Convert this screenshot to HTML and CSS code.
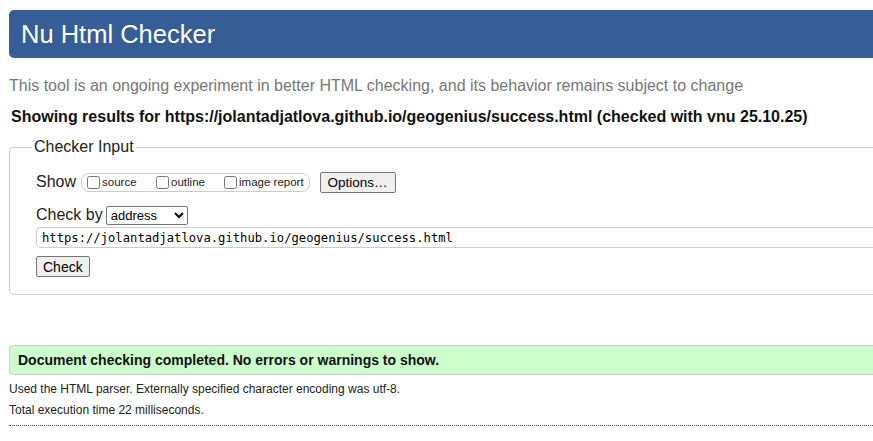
FILE: index.html
```html
<!DOCTYPE html>
<html>
<head>
<meta charset="utf-8">
<link rel="stylesheet" href="styles.css">
</head>
<body>
<h1 class="title">Nu Html Checker</h1>
<p class="intro">This tool is an ongoing experiment in better HTML checking, and its behavior remains subject to change</p>
<p class="results">Showing results for https://jolantadjatlova.github.io/geogenius/success.html (checked with vnu 25.10.25)</p>
<fieldset class="input-box">
  <legend class="legend">Checker Input</legend>
  <div class="row show-row">
    <span class="label">Show</span>
    <span class="opts">
      <label class="opt opt-source"><input type="checkbox" class="cb">source</label>
      <label class="opt opt-outline"><input type="checkbox" class="cb">outline</label>
      <label class="opt"><input type="checkbox" class="cb">image report</label>
    </span>
    <button class="btn btn-options">Options…</button>
  </div>
  <div class="row checkby-row">
    <span class="label">Check by</span>
    <select class="sel"><option>address</option></select>
  </div>
  <input class="url" type="text" value="https://jolantadjatlova.github.io/geogenius/success.html">
  <div class="row"><button class="btn btn-check">Check</button></div>
</fieldset>
<p class="success">Document checking completed. No errors or warnings to show.</p>
<p class="note">Used the HTML parser. Externally specified character encoding was utf-8.</p>
<p class="note">Total execution time 22 milliseconds.</p>
<hr class="end">
</body>
</html>
```
FILE: styles.css
```css
html, body {
  margin: 0;
  padding: 0;
  overflow: hidden;
  background: #fff;
}
body {
  padding: 10px 0 0 9px;
  font-family: "Liberation Sans", Arial, sans-serif;
  color: #000;
}
.title {
  margin: 0;
  height: 48px;
  box-sizing: border-box;
  padding: 9px 0 0 12px;
  background: #365d95;
  color: #fff;
  font-size: 25.5px;
  font-weight: normal;
  line-height: 30px;
  border-radius: 5px 0 0 5px;
}
.intro {
  margin: 18px 0 0 0;
  font-size: 16px;
  line-height: 20px;
  color: #777;
}
.results {
  margin: 11px 0 0 2px;
  font-size: 16px;
  line-height: 20px;
  font-weight: bold;
  color: #111;
}
.input-box {
  margin: 11px 0 0 0;
  padding: 8px 0 17px 26px;
  border: 1px solid #ccc;
  border-right: none;
  border-radius: 5px 0 0 5px;
  display: flex;
  flex-direction: column;
  gap: 0;
}
.legend {
  padding: 0 2px;
  margin-left: -4px;
  font-size: 16px;
  color: #222;
}
.row {
  display: flex;
  align-items: center;
}
.label {
  font-size: 16px;
  color: #222;
}
.show-row {
  margin-top: 5px;
  height: 26px;
}
.opts {
  margin-left: 5px;
  display: flex;
  align-items: center;
  height: 17px;
  padding: 0 5px 0 5px;
  border: 1px solid #ccc;
  border-radius: 8px;
}
.opt {
  display: flex;
  align-items: center;
  font-size: 11.5px;
  color: #222;
}
.opt-source { width: 69px; }
.opt-outline { width: 68px; }
.cb {
  margin: 0 2px 0 0;
  width: 13px;
  height: 13px;
}
.btn {
  font-family: "Liberation Sans", Arial, sans-serif;
  font-size: 13.5px;
  color: #000;
  background: #efefef;
  border: 1px solid #767676;
  border-radius: 2px;
  padding: 1px 7px;
  height: 21px;
}
.btn-options {
  margin-left: 10px;
}
.checkby-row {
  margin-top: 10px;
  height: 20px;
}
.sel {
  margin-left: 3px;
  font-family: "Liberation Sans", Arial, sans-serif;
  font-size: 13px;
  height: 19px;
  width: 82px;
  border: 1px solid #767676;
  border-radius: 2px;
  background: #fff;
  color: #000;
  padding: 0;
}
.url {
  margin-top: 2px;
  height: 21px;
  box-sizing: border-box;
  border: 1px solid #ccc;
  border-right: none;
  border-radius: 5px 0 0 5px;
  padding: 0 0 0 5px;
  font-family: "DejaVu Sans Mono", "Liberation Mono", monospace;
  font-size: 12.2px;
  color: #000;
}
.btn-check {
  margin-top: 8px;
  padding: 1px 6px;
  font-size: 14px;
}
.success {
  margin: 50px 0 0 0;
  height: 30px;
  box-sizing: border-box;
  padding: 0 0 0 8px;
  background: #ccffcc;
  border: 1px solid #ccc;
  border-right: none;
  border-radius: 4px 0 0 4px;
  font-size: 14px;
  font-weight: bold;
  line-height: 28px;
  color: #111;
}
.note {
  margin: 6px 0 0 0;
  font-size: 12px;
  line-height: 16px;
  color: #222;
}
.note + .note {
  margin-top: 5px;
}
.end {
  margin: 7px 0 0 0;
  border: none;
  border-top: 1px dotted #555;
  height: 0;
}
```
